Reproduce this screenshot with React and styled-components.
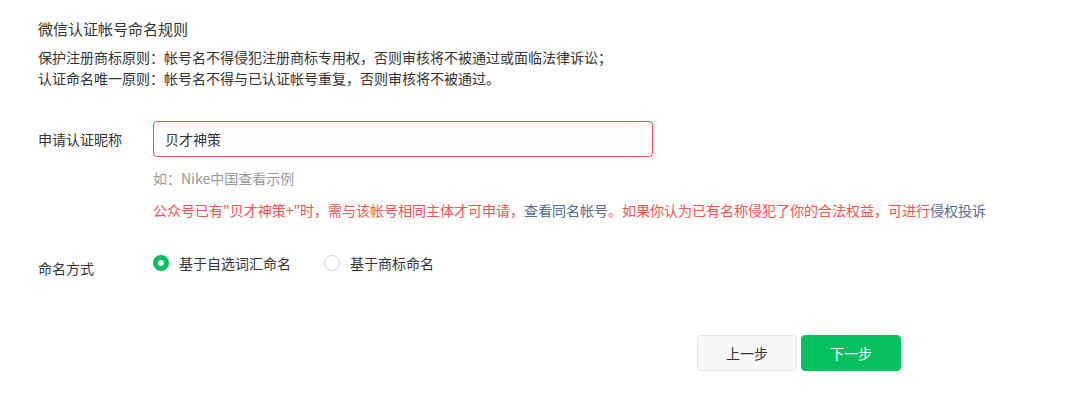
import React, { useState } from "react";
import styled, { createGlobalStyle } from "styled-components";

const Global = createGlobalStyle`
  body {
    margin: 0;
    background: #ffffff;
    font-family: "Noto Sans CJK SC", "Noto Sans", sans-serif;
    color: #353535;
  }
`;

const Page = styled.div`
  padding: 18px 0 0 38px;
`;

const Title = styled.div`
  font-size: 15px;
  line-height: 20px;
  margin-bottom: 8px;
  padding-top: 1px;
`;

const Rules = styled.div`
  font-size: 14px;
  line-height: 21px;
`;

const Row = styled.div`
  display: flex;
  align-items: ${(p) => p.$align || "center"};
  margin-top: ${(p) => p.$top || 0}px;
`;

const Label = styled.div`
  width: 115px;
  flex: none;
  font-size: 14px;
  line-height: 20px;
  padding-top: ${(p) => p.$pad || 0}px;
`;

const Field = styled.div`
  display: flex;
  flex-direction: column;
`;

const Input = styled.input`
  box-sizing: border-box;
  width: 500px;
  height: 36px;
  border: 1px solid #fa5151;
  border-radius: 4px;
  padding: 0 11px;
  font-family: inherit;
  font-size: 14px;
  color: #353535;
  outline: none;
`;

const Hint = styled.div`
  margin-top: 11px;
  font-size: 14px;
  line-height: 20px;
  color: #9a9a9a;
`;

const Error = styled.div`
  margin-top: 12px;
  font-size: 14px;
  line-height: 20px;
  color: #fa5151;
  white-space: nowrap;
`;

const Link = styled.a`
  color: #576b95;
  text-decoration: none;
  cursor: pointer;
`;

const Options = styled.div`
  display: flex;
  gap: 33px;
`;

const Option = styled.label`
  display: flex;
  align-items: center;
  gap: 10px;
  font-size: 14px;
  line-height: 20px;
  cursor: pointer;
`;

const Dot = styled.span`
  box-sizing: border-box;
  width: 16px;
  height: 16px;
  border-radius: 50%;
  background: #fff;
  border: ${(p) => (p.$on ? "5px solid #07c160" : "1px solid #d5d5d5")};
`;

const Footer = styled.div`
  display: flex;
  gap: 4px;
  margin-top: 57px;
  padding-left: 659px;
`;

const Button = styled.button`
  box-sizing: border-box;
  width: 100px;
  height: 36px;
  border-radius: 4px;
  font-family: inherit;
  font-size: 14px;
  cursor: pointer;
  border: 1px solid ${(p) => (p.$primary ? "#07c160" : "#e5e5e5")};
  background: ${(p) => (p.$primary ? "#07c160" : "#f7f7f7")};
  color: ${(p) => (p.$primary ? "#ffffff" : "#353535")};
`;

export default function App() {
  const [mode, setMode] = useState(0);
  const [name, setName] = useState("贝才神策");
  return (
    <Page>
      <Global />
      <Title>微信认证帐号命名规则</Title>
      <Rules>
        <div>保护注册商标原则：帐号名不得侵犯注册商标专用权，否则审核将不被通过或面临法律诉讼；</div>
        <div>认证命名唯一原则：帐号名不得与已认证帐号重复，否则审核将不被通过。</div>
      </Rules>
      <Row $top={32} $align="flex-start">
        <Label $pad={8}>申请认证昵称</Label>
        <Field>
          <Input value={name} onChange={(e) => setName(e.target.value)} />
          <Hint>如：Nike中国查看示例</Hint>
          <Error>
            公众号已有"贝才神策+"时，需与该帐号相同主体才可申请，<Link>查看同名帐号</Link>。如果你认为已有名称侵犯了你的合法权益，可进行<Link>侵权投诉</Link>
          </Error>
        </Field>
      </Row>
      <Row $top={33} $align="flex-start">
        <Label $pad={5}>命名方式</Label>
        <Options>
          <Option onClick={() => setMode(0)}>
            <Dot $on={mode === 0} />
            基于自选词汇命名
          </Option>
          <Option onClick={() => setMode(1)}>
            <Dot $on={mode === 1} />
            基于商标命名
          </Option>
        </Options>
      </Row>
      <Footer>
        <Button>上一步</Button>
        <Button $primary>下一步</Button>
      </Footer>
    </Page>
  );
}
